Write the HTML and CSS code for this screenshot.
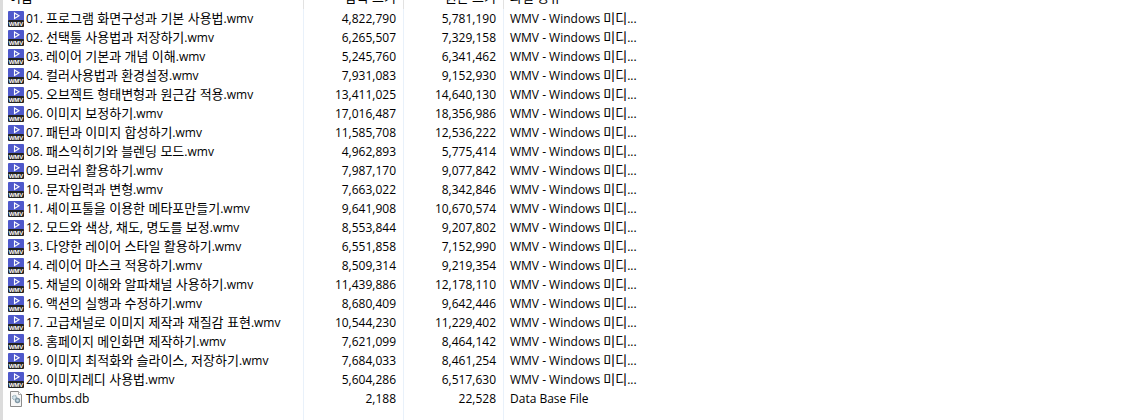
FILE: index.html
```html
<!DOCTYPE html>
<html lang="ko">
<head>
    <meta charset="UTF-8"/>
    <meta name="viewport" content="width=device-width, initial-scale=1.0"/>
    <title>파일 목록</title>
    <link rel="stylesheet" href="styles.css">
</head>
<body>
<svg class="symbols" aria-hidden="true">
    <symbol id="icon-wmv" viewBox="0 0 16 16">
        <rect width="16" height="11" rx="1" fill="#4f59cb"/>
        <path d="M6.5 2v5.5L11 4.75z" fill="none" stroke="#fff" stroke-width="1.1"/>
        <rect y="9" width="16" height="7" rx="1" fill="#222"/>
        <text class="icon-text" x="8" y="15" text-anchor="middle">WMV</text>
    </symbol>
    <symbol id="icon-db" viewBox="0 0 16 16">
        <path d="M2.5.5h8l3 3v12h-11z" fill="#f7f7f7" stroke="#8c8c8c"/>
        <path d="M10.5.5v3h3" fill="#fff" stroke="#a5a5a5"/>
        <circle cx="6.500" cy="6.500" r="2" fill="#dcebf2" stroke="#9bb0bb" stroke-width="1.400" stroke-dasharray="1 .5"/>
        <circle cx="9.500" cy="9.500" r="2" fill="#c8dce6" stroke="#8298a5" stroke-width="1.400"/>
    </symbol>
</svg>

<div class="file-list">
    <table>
        <colgroup>
            <col class="col-name">
            <col class="col-size">
            <col class="col-size">
            <col>
        </colgroup>
        <thead>
        <tr>
            <th><div class="head">이름</div></th>
            <th><div class="head">압축 크기</div></th>
            <th><div class="head">원본 크기</div></th>
            <th><div class="head">파일 종류</div></th>
        </tr>
        </thead>
        <tbody id="files"></tbody>
    </table>
</div>

<script src="files.js"></script>
</body>
</html>
```
FILE: styles.css
```css
body {
    margin: 0;
    background: #fff;
    color: #000;
    font-family: "Open Sans", "Noto Sans CJK KR", sans-serif;
    font-size: 12px;
}

.symbols {
    position: absolute;
    width: 0;
    height: 0;
}

.file-list {
    box-sizing: border-box;
    min-height: 100vh;
    border-left: 3px solid #dcdcdc;
    display: flex;
}

table {
    width: 100%;
    table-layout: fixed;
    border-collapse: separate;
    border-spacing: 0;
}

.col-name {
    width: 301px;
}

.col-size {
    width: 100px;
}

th, td {
    box-sizing: border-box;
    padding: 0 7px 0 6px;
    border-right: 1px solid #e9f1fa;
    white-space: nowrap;
    font-weight: normal;
    text-align: left;
    vertical-align: top;
}

th:last-child, td:last-child {
    border-right: none;
}

th {
    height: 9px;
    border-right-color: #e2e2e2;
}

/* header is scrolled mostly out of view */
.head {
    display: flex;
    align-items: flex-end;
    height: 9px;
    line-height: 23px;
    font-size: 13px;
    overflow: hidden;
}

th:nth-child(2) .head, th:nth-child(3) .head {
    justify-content: flex-end;
}

td {
    height: 19px;
    line-height: 19px;
}

.name {
    padding: 0 0 0 5px;
}

.name-box {
    display: flex;
    align-items: center;
    gap: 2px;
    height: 19px;
}

.icon {
    flex: none;
    width: 16px;
    height: 16px;
}

.icon-text {
    fill: #fff;
    font-family: "Liberation Sans", sans-serif;
    font-size: 6px;
    font-weight: bold;
}

.ko {
    font-size: 13px;
}

.size {
    text-align: right;
}

/* spare row that carries the column lines to the bottom */
.filler td {
    height: auto;
}
```
FILE: files.js
```js
const files = [
    ["01. ", "프로그램 화면구성과 기본 사용법", "4,822,790", "5,781,190"],
    ["02. ", "선택툴 사용법과 저장하기", "6,265,507", "7,329,158"],
    ["03. ", "레이어 기본과 개념 이해", "5,245,760", "6,341,462"],
    ["04. ", "컬러사용법과 환경설정", "7,931,083", "9,152,930"],
    ["05. ", "오브젝트 형태변형과 원근감 적용", "13,411,025", "14,640,130"],
    ["06. ", "이미지 보정하기", "17,016,487", "18,356,986"],
    ["07. ", "패턴과 이미지 합성하기", "11,585,708", "12,536,222"],
    ["08. ", "패스익히기와 블렌딩 모드", "4,962,893", "5,775,414"],
    ["09. ", "브러쉬 활용하기", "7,987,170", "9,077,842"],
    ["10. ", "문자입력과 변형", "7,663,022", "8,342,846"],
    ["11. ", "셰이프툴을 이용한 메타포만들기", "9,641,908", "10,670,574"],
    ["12. ", "모드와 색상, 채도, 명도를 보정", "8,553,844", "9,207,802"],
    ["13. ", "다양한 레이어 스타일 활용하기", "6,551,858", "7,152,990"],
    ["14. ", "레이어 마스크 적용하기", "8,509,314", "9,219,354"],
    ["15. ", "채널의 이해와 알파채널 사용하기", "11,439,886", "12,178,110"],
    ["16. ", "액션의 실행과 수정하기", "8,680,409", "9,642,446"],
    ["17. ", "고급채널로 이미지 제작과 재질감 표현", "10,544,230", "11,229,402"],
    ["18. ", "홈페이지 메인화면 제작하기", "7,621,099", "8,464,142"],
    ["19. ", "이미지 최적화와 슬라이스, 저장하기", "7,684,033", "8,461,254"],
    ["20. ", "이미지레디 사용법", "5,604,286", "6,517,630"],
];

function row(icon, name, packed, size, type) {
    return `<tr>
        <td class="name"><div class="name-box"><svg class="icon"><use href="#${icon}"/></svg><span>${name}</span></div></td>
        <td class="size">${packed}</td>
        <td class="size">${size}</td>
        <td>${type}</td>
    </tr>`;
}

let html = "";
files.forEach(([no, title, packed, size]) => {
    html += row("icon-wmv", `${no}<span class="ko">${title}</span>.wmv`, packed, size,
        'WMV - Windows <span class="ko">미디</span>...');
});
html += row("icon-db", "Thumbs.db", "2,188", "22,528", "Data Base File");
html += '<tr class="filler"><td></td><td></td><td></td><td></td></tr>';

document.getElementById("files").innerHTML = html;
```
